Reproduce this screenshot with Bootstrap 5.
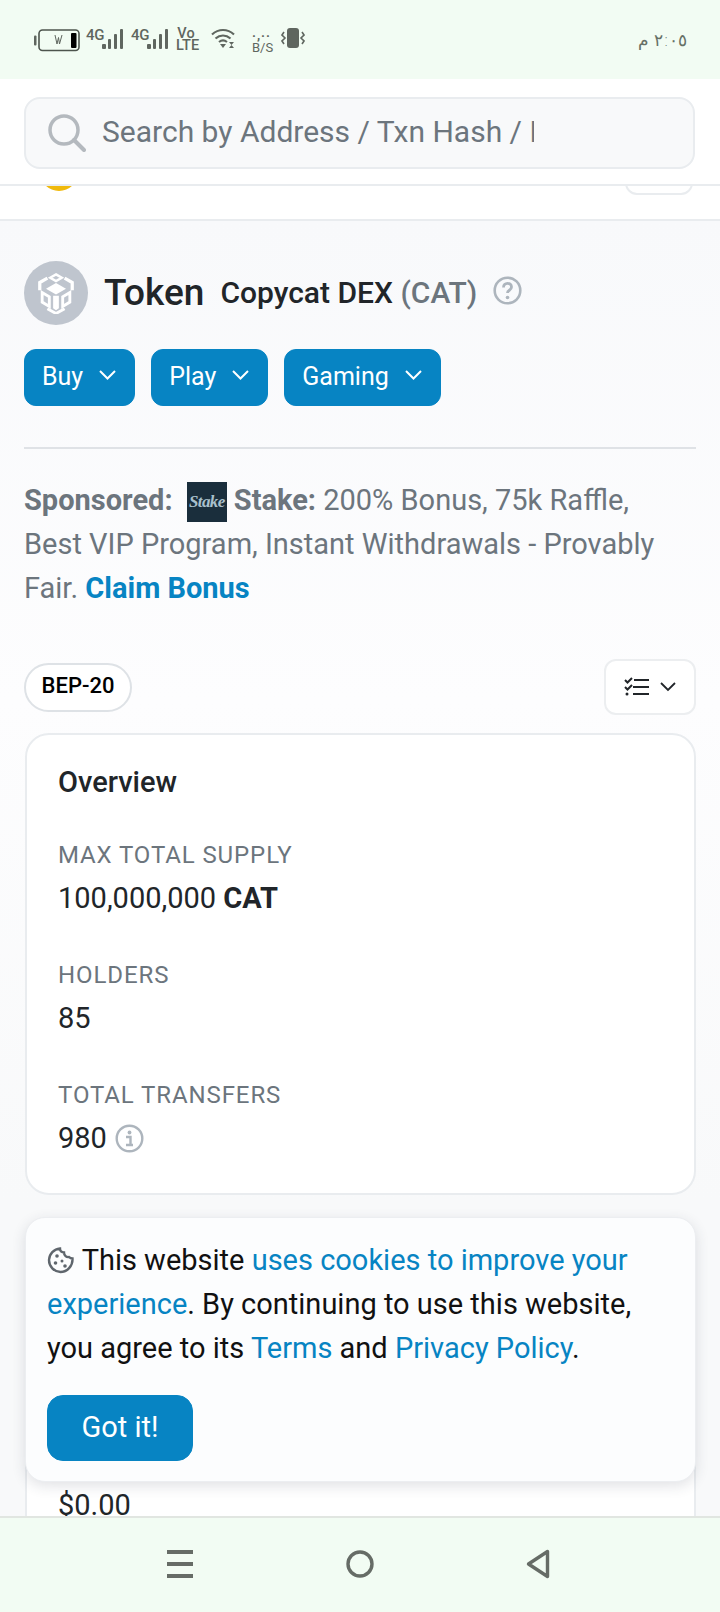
<!DOCTYPE html>
<html lang="en">
<head>
  <meta charset="UTF-8" />
  <meta name="viewport" content="width=device-width, initial-scale=1.0"/>
  <title>Token Copycat DEX (CAT)</title>
  <link href="https://cdn.jsdelivr.net/npm/bootstrap@5.3.0/dist/css/bootstrap.min.css" rel="stylesheet" />
  <style>
    html, body { height: 1612px; overflow: hidden; }
    body { font-family: Roboto, "Liberation Sans", sans-serif; font-size: 29px; line-height: 44px; color: #212529; background: #fff; }
    .phone { height: 1612px; }
    .status-bar { height: 79px; background: #f2fcf3; padding: 28px 33px 0 34px; color: #5f665f; }
    .batt { margin-top: 1px; }
    .net-wrap { height: 24px; margin-left: 6px; }
    .net-wrap + .net-wrap { margin-left: 8px; }
    .net { font-size: 15px; line-height: 15px; font-weight: 500; width: 17px; letter-spacing: -.3px; }
    .sig { margin-left: -1px; }
    .lte { font-size: 14.5px; line-height: 12px; font-weight: 500; text-align: center; margin-left: 8px; width: 20px; }
    .wifi { margin-left: 15px; }
    .bps { font-size: 13px; line-height: 12px; text-align: center; width: 17px; margin-left: 17px; margin-top: 2px; white-space: nowrap; }
    .bps-dots { letter-spacing: 1px; font-weight: 700; }
    .vib { margin-left: 12px; }
    .clock { font-family: "DejaVu Sans", sans-serif; font-size: 17px; line-height: 24px; font-weight: 200; color: #667066; }
    .top-head { height: 142px; background: #fff; border-bottom: 2px solid #e9ecef; }
    .search-wrap { padding: 18px 25px 18px 24px; height: 107px; border-bottom: 2px solid #e9ecef; }
    .search-box { height: 72px; background: #f8f9fa; border: 2px solid #e9ecef; border-radius: 16px; padding-left: 22px; }
    .search-box .form-control { width: 432px; flex: none; border: 0; background: transparent; padding: 0 0 4px; margin-left: 16px; font-size: 30px; box-shadow: none; }
    .search-box .form-control::placeholder { color: #6c757d; opacity: 1; }
    .clip-row { height: 33px; overflow: hidden; padding: 0 27px 0 40px; }
    .clip-logo { width: 38px; height: 38px; border-radius: 50%; background: #f0b90b; margin-top: -33px; }
    .clip-btn { width: 68px; height: 42px; border: 2px solid #e9ecef; border-radius: 12px; margin-top: -33px; }
    .page-main { flex: 1 1 auto; min-height: 0; overflow: hidden; background: linear-gradient(#f8f9fb, #fdfdfe 480px, #f8f9fa 980px); padding: 40px 24px 0; }
    .token-logo { width: 64px; height: 64px; border-radius: 50%; background: #bfc5ce; flex: none; }
    .token-title { font-size: 37px; font-weight: 500; line-height: 62px; margin-left: 16px; }
    .token-name { font-size: 30px; font-weight: 500; margin-left: 16px; line-height: 62px; }
    .token-sym { color: #6c757d; font-weight: 500; }
    .q-icon { margin-left: 16px; margin-bottom: 6px; }
    .btn-scan { background: #0784c3; border-color: #0784c3; color: #fff; font-size: 25px; line-height: 36px; border-radius: 12px; padding: 8px 18px 10px 17px; height: 57px; white-space: nowrap; }
    .btn-scan svg { margin-left: 16px; vertical-align: 5px; }
    .btn-row { margin-top: 24px; gap: 16px; }
    .sep { margin: 41px 0 0 0; border-top: 2px solid #dfe2e6; opacity: 1; width: 672px; }
    .sponsor { margin-top: 29px; color: #6c757d; width: 650px; }
    .sponsor b { font-weight: 700; }
    .sponsor a { color: #0784c3; font-weight: 700; text-decoration: none; }
    .stake-tile { display: inline-block; width: 40px; height: 40px; background: #1a2e3c; color: #a9c0cc; font-family: "Liberation Serif", serif; font-style: italic; font-weight: 700; font-size: 17px; letter-spacing: -.6px; line-height: 40px; text-align: center; vertical-align: -12px; margin: 0 7px 0 7px; overflow: hidden; }
    .type-row { margin-top: 49px; width: 672px; }
    .type-pill { height: 49px; width: 108px; border: 2px solid #dee2e6; border-radius: 25px; background: #fff; color: #000; font-size: 22px; font-weight: 500; line-height: 42px; text-align: center; margin-top: 4px; }
    .view-btn { width: 92px; height: 56px; border: 2px solid #eceef0; border-radius: 12px; background: #fff; gap: 10px; }
    .info-panel { width: 671px; margin-left: 1px; background: #fff; border: 2px solid #e9ecef; border-radius: 24px; }
    .overview { margin-top: 18px; height: 462px; padding: 29px 31px 0; }
    .panel-title { font-size: 29px; font-weight: 500; line-height: 36px; margin-bottom: 37px; }
    .stat-label { font-size: 24px; line-height: 36px; letter-spacing: .9px; color: #6c757d; text-transform: uppercase; margin-bottom: 3px; }
    .stat-value { line-height: 44px; margin-bottom: 37px; }
    .next-panel { margin-top: 22px; height: 400px; padding: 275px 31px 0; line-height: 22px; }
    .cookie-box { position: absolute; left: 25px; width: 671px; top: 1217px; height: 265px; background: #fcfdfe; border-radius: 20px; box-shadow: 0 4px 14px rgba(40,50,70,.14); border: 1px solid #eceef1; padding: 20px 21px; color: #111; }
    .cookie-box a { color: #0784c3; text-decoration: none; }
    .cookie-ico { vertical-align: -4px; }
    .btn-got { margin-top: 25px; width: 146px; height: 66px; background: #0784c3; border-color: #0784c3; color: #fff; font-size: 29px; border-radius: 16px; }
    .nav-bar { height: 96px; background: #f2fcf3; border-top: 2px solid #e1e6e1; padding-bottom: 3px; }
    .nav-slot { width: 180px; }
    .nav-back { margin-right: 5px; }
  </style>
</head>
<body>
<div class="phone d-flex flex-column position-relative">

  <div class="status-bar d-flex justify-content-between flex-shrink-0">
    <div class="d-flex align-items-start">
      <svg class="batt" width="46" height="23" viewBox="0 0 46 23">
        <rect x="0" y="6.500" width="2.500" height="10" rx="1" fill="#5f665f"/>
        <rect x="5" y="1" width="40" height="20.500" rx="3.500" fill="none" stroke="#4d544d" stroke-width="1.600"/>
        <rect x="37" y="4" width="5.500" height="15" rx="1" fill="#000"/>
        <path d="M21 6l2 9 1.500-6.500M28 6l-2.500 9-1-6.500" fill="none" stroke="#5f665f" stroke-width="1"/>
      </svg>
      <div class="net-wrap d-flex align-items-start">
        <span class="net">4G</span>
        <svg class="sig" width="21" height="22" viewBox="0 0 21 22"><g fill="#5f665f"><rect x="0" y="16" width="4" height="5" rx="1"/><rect x="6" y="11" width="3" height="10" rx="1"/><rect x="12" y="6" width="3" height="15" rx="1"/><rect x="18" y="1" width="3" height="20" rx="1"/></g></svg>
      </div>
      <div class="net-wrap d-flex align-items-start">
        <span class="net">4G</span>
        <svg class="sig" width="21" height="22" viewBox="0 0 21 22"><g fill="#5f665f"><rect x="0" y="16" width="4" height="5" rx="1"/><rect x="6" y="11" width="3" height="10" rx="1"/><rect x="12" y="6" width="3" height="15" rx="1"/><rect x="18" y="1" width="3" height="20" rx="1"/></g></svg>
      </div>
      <div class="lte">Vo<br>LTE</div>
      <svg class="wifi" width="24" height="21" viewBox="0 0 24 21"><g fill="none" stroke="#5f665f" stroke-width="2.200"><path d="M1 6.500c6.500-6 15.500-6 22 0"/><path d="M4.500 10.500c4.500-4 10.500-4 15 0"/><path d="M8 14c2.500-2 5.500-2 8 0"/></g><path d="M9 16h6l-3 4z" fill="#5f665f"/><path d="M18 14h5l-2.500 3zM18 20h5l-2.500-3z" fill="#5f665f"/></svg>
      <div class="bps"><span class="bps-dots">·,··</span><br>B/S</div>
      <svg class="vib" width="24" height="21" viewBox="0 0 24 21"><rect x="6" y="0" width="12" height="20" rx="3" fill="#5f665f"/><g fill="none" stroke="#5f665f" stroke-width="1.600"><path d="M3 4l-2 3 3 3-3 3 2 3"/><path d="M21 4l2 3-3 3 3 3-2 3"/></g></svg>
    </div>
    <div class="clock" dir="rtl" lang="ar">٢:٠٥ م</div>
  </div>

  <header class="top-head flex-shrink-0">
    <div class="search-wrap">
      <div class="search-box d-flex align-items-center">
        <svg class="flex-shrink-0" width="38" height="38" viewBox="0 0 38 38"><circle cx="16" cy="16" r="14" fill="none" stroke="#b4b9be" stroke-width="3.500"/><path d="M26 26l10 10" stroke="#b4b9be" stroke-width="4" stroke-linecap="round"/></svg>
        <input type="text" class="form-control" placeholder="Search by Address / Txn Hash / Block / Token">
      </div>
    </div>
    <div class="clip-row d-flex justify-content-between align-items-start">
      <div class="clip-logo"></div>
      <div class="clip-btn"></div>
    </div>
  </header>

  <main class="page-main">
    <div class="d-flex align-items-center">
      <div class="token-logo d-flex align-items-center justify-content-center">
        <svg width="40" height="42" viewBox="0 0 40 44">
          <g fill="none" stroke="#fff" stroke-linejoin="miter">
            <path d="M20 2.500l6 3.500-6 3.500-6-3.500z" stroke-width="2.600"/>
            <path d="M11 6.500l-8 4.500v8" stroke-width="3.400"/>
            <path d="M29 6.500l8 4.500v8" stroke-width="3.400"/>
            <path d="M5.500 21.500v10l7.500 4.500v-10z" stroke-width="3"/>
            <path d="M34.500 21.500v10l-7.500 4.500v-10z" stroke-width="3"/>
            <path d="M11 38.500l9 5 9-5" stroke-width="3"/>
          </g>
          <path d="M20 11.500l10.500 6-10.500 6-10.500-6z" fill="#fff"/>
          <path d="M17 25h6v13l-3 2-3-2z" fill="#fff"/>
        </svg>
      </div>
      <span class="token-title">Token</span>
      <span class="token-name">Copycat DEX <span class="token-sym">(CAT)</span></span>
      <svg class="q-icon" width="29" height="29" viewBox="0 0 29 29"><circle cx="14.500" cy="14.500" r="12.800" fill="none" stroke="#adb5bd" stroke-width="2.600"/><path d="M10.500 11.500c0-5.500 8-5.500 8-.5 0 3.500-4 3-4 6" fill="none" stroke="#adb5bd" stroke-width="2.800"/><circle cx="14.500" cy="21.500" r="1.800" fill="#adb5bd"/></svg>
    </div>

    <div class="d-flex btn-row">
      <button type="button" class="btn btn-scan">Buy<svg width="17" height="10" viewBox="0 0 17 10"><path d="M1 1l7.500 7.500L16 1" fill="none" stroke="#fff" stroke-width="2"/></svg></button>
      <button type="button" class="btn btn-scan">Play<svg width="17" height="10" viewBox="0 0 17 10"><path d="M1 1l7.500 7.500L16 1" fill="none" stroke="#fff" stroke-width="2"/></svg></button>
      <button type="button" class="btn btn-scan">Gaming<svg width="17" height="10" viewBox="0 0 17 10"><path d="M1 1l7.500 7.500L16 1" fill="none" stroke="#fff" stroke-width="2"/></svg></button>
    </div>

    <hr class="sep">

    <p class="sponsor mb-0"><b>Sponsored:</b> <span class="stake-tile">Stake</span><b>Stake:</b> 200% Bonus, 75k Raffle, Best VIP Program, Instant Withdrawals - Provably Fair. <a href="#">Claim Bonus</a></p>

    <div class="d-flex justify-content-between align-items-start type-row">
      <div class="type-pill">BEP-20</div>
      <div class="view-btn d-flex align-items-center justify-content-center">
        <svg width="26" height="20" viewBox="0 0 26 20"><g fill="none" stroke="#212529" stroke-width="2"><path d="M1 3l2.500 2.500L8 1"/><path d="M1 10l2.500 2.500L8 8"/><path d="M10 3h15M9 10h16M9 17h16"/></g><circle cx="3" cy="17" r="1.500" fill="#212529"/></svg>
        <svg width="16" height="10" viewBox="0 0 16 10"><path d="M1 1l7 7 7-7" fill="none" stroke="#212529" stroke-width="1.800"/></svg>
      </div>
    </div>

    <section class="info-panel overview">
      <div class="panel-title">Overview</div>
      <div class="stat-label">Max Total Supply</div>
      <div class="stat-value">100,000,000 <b>CAT</b></div>
      <div class="stat-label">Holders</div>
      <div class="stat-value">85</div>
      <div class="stat-label">Total Transfers</div>
      <div class="stat-value d-flex align-items-center">980
        <svg class="ms-2" width="29" height="29" viewBox="0 0 29 29"><circle cx="14.500" cy="14.500" r="12.800" fill="none" stroke="#adb5bd" stroke-width="2.400"/><circle cx="14.500" cy="8.500" r="1.900" fill="#adb5bd"/><path d="M11 13h4.500v7.500M11 21h7" fill="none" stroke="#adb5bd" stroke-width="2.400"/></svg>
      </div>
    </section>

    <section class="info-panel next-panel">$0.00</section>
  </main>

  <div class="cookie-box">
    <svg class="cookie-ico" width="28" height="28" viewBox="0 0 28 28"><path d="M13 2.500c0 3 2 4 4 4 0 3 2.500 5 5 4.500 1 1 2 1.500 3.500 1.500.5 7-5 13.500-12 13.500A12 12 0 0 1 2 14 12 12 0 0 1 13 2.500z" fill="none" stroke="#5f666d" stroke-width="2.400"/><g fill="#5f666d"><circle cx="10" cy="10" r="1.800"/><circle cx="8.500" cy="17" r="1.800"/><circle cx="15" cy="15" r="1.500"/><circle cx="18" cy="20" r="1.800"/></g></svg>
    This website <a href="#">uses cookies to improve your experience</a>. By continuing to use this website, you agree to its <a href="#">Terms</a> and <a href="#">Privacy Policy</a>.
    <div><button type="button" class="btn btn-got">Got it!</button></div>
  </div>

  <nav class="nav-bar d-flex justify-content-center align-items-center flex-shrink-0">
    <div class="nav-slot d-flex justify-content-center">
      <svg width="26" height="28" viewBox="0 0 26 28"><g fill="#666c66"><rect y="0" width="26" height="4"/><rect y="12" width="26" height="4"/><rect y="24" width="26" height="4"/></g></svg>
    </div>
    <div class="nav-slot d-flex justify-content-center">
      <svg width="28" height="28" viewBox="0 0 28 28"><circle cx="14" cy="14" r="12" fill="none" stroke="#666c66" stroke-width="3.400"/></svg>
    </div>
    <div class="nav-slot d-flex justify-content-center">
      <svg class="nav-back" width="24" height="30" viewBox="0 0 24 30"><path d="M21.500 2.500v25L2.500 15z" fill="none" stroke="#666c66" stroke-width="3.400" stroke-linejoin="round"/></svg>
    </div>
  </nav>
</div>
</body>
</html>
